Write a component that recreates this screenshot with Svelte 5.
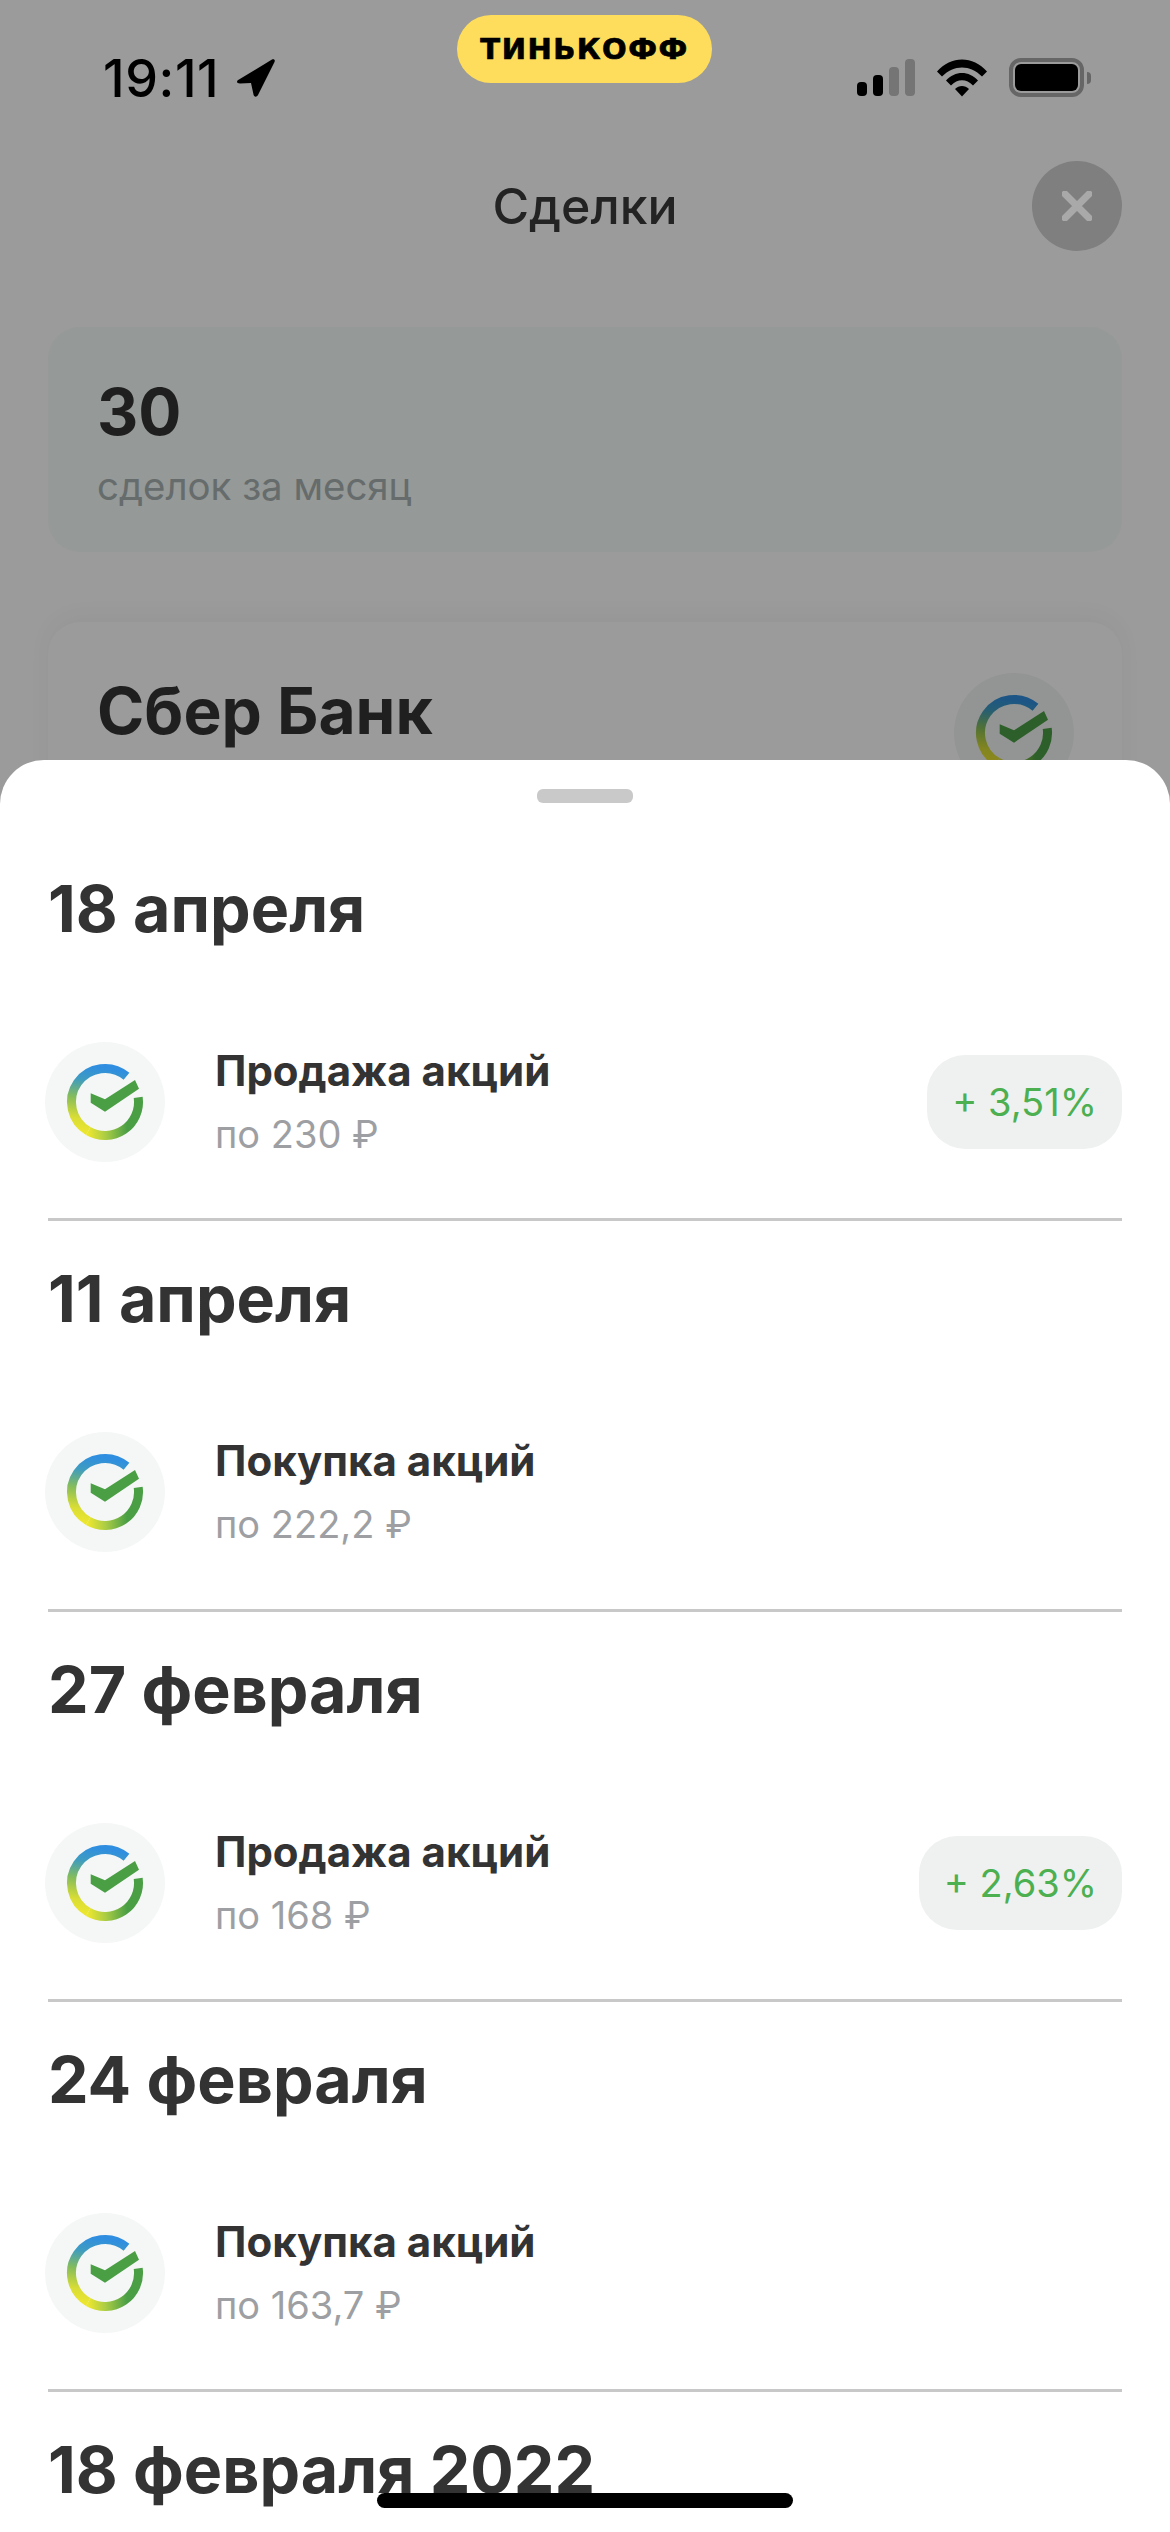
<script>
  const deals = [
    { date: "18 апреля", title: "Продажа акций", price: "по 230 ₽", profit: "+ 3,51%" },
    { date: "11 апреля", title: "Покупка акций", price: "по 222,2 ₽" },
    { date: "27 февраля", title: "Продажа акций", price: "по 168 ₽", profit: "+ 2,63%" },
    { date: "24 февраля", title: "Покупка акций", price: "по 163,7 ₽" }
  ];
</script>

{#snippet logo(id, dim)}
  <div class="logo" class:dim>
    <svg width="120" height="120" viewBox="0 0 120 120">
      <defs>
        <linearGradient id="{id}a" gradientUnits="userSpaceOnUse" x1="60" y1="26" x2="50" y2="92">
          <stop offset="0" stop-color="#2f8ee0" />
          <stop offset="0.22" stop-color="#3f9cc0" />
          <stop offset="0.5" stop-color="#86bd5a" />
          <stop offset="0.8" stop-color="#d9dd35" />
          <stop offset="1" stop-color="#ece62f" />
        </linearGradient>
        <linearGradient id="{id}b" gradientUnits="userSpaceOnUse" x1="43" y1="89" x2="82" y2="86">
          <stop offset="0" stop-color="#ece62f" />
          <stop offset="0.45" stop-color="#a9cc45" />
          <stop offset="1" stop-color="#4a9f45" />
        </linearGradient>
      </defs>
      <path d="M81.5 34.3A33.5 33.5 0 1 0 43.25 89" fill="none" stroke="url(#{id}a)" stroke-width="9" />
      <path d="M43.25 89A33.5 33.5 0 0 0 93.2 55.3" fill="none" stroke="url(#{id}b)" stroke-width="9" />
      <path d="M45.7 51.3V60.7L60 69.7L94 46.7L90 38L60 57.3Z" fill="#4a9f45" />
    </svg>
  </div>
{/snippet}

<div class="page">
  <div class="status">
    <div class="time">
      19:11
      <svg class="arrow" width="40" height="40" viewBox="0 0 40 40">
        <path d="M3 21.5 36 1.5c2-1 3.5.5 2.5 2.5L22 37c-1.500 2.500-4 2-4.500-.5L15 25 4 25.500C.5 25.500 0 23 3 21.500Z" fill="#000" />
      </svg>
    </div>
    <div class="pill">ТИНЬКОФФ</div>
    <div class="indicators">
      <div class="signal">
        <span class="bar b1"></span>
        <span class="bar b2"></span>
        <span class="bar b3 off"></span>
        <span class="bar b4 off"></span>
      </div>
      <svg width="50" height="38" viewBox="0 0 50 38">
        <path d="M0 12.500C14-3.500 36-3.500 50 12.500L45 17.500C33 5.500 17 5.500 5 17.500Z" fill="#000" />
        <path d="M9 21.500C18 11.500 32 11.500 41 21.500L36 26.500C29.500 19.500 20.500 19.500 14 26.500Z" fill="#000" />
        <path d="M18 30C22 26 28 26 32 30L25 37.500Z" fill="#000" />
      </svg>
      <div class="battery">
        <div class="cell"><span></span></div>
        <i></i>
      </div>
    </div>
  </div>

  <header class="nav">
    <h1>Сделки</h1>
    <button class="close" aria-label="Закрыть">
      <svg width="30" height="30" viewBox="0 0 30 30">
        <path d="M3 3 27 27M27 3 3 27" stroke="#a9a9a9" stroke-width="7" stroke-linecap="round" />
      </svg>
    </button>
  </header>

  <section class="summary">
    <div class="count">30</div>
    <div class="count-label">сделок за месяц</div>
  </section>

  <section class="company">
    <div class="company-name">Сбер Банк</div>
    {@render logo("bg", true)}
  </section>

  <div class="sheet">
    <div class="handle"></div>
    {#each deals as deal, i}
      <section class="deal">
        <h2>{deal.date}</h2>
        <div class="row">
          {@render logo("d" + i, false)}
          <div class="info">
            <div class="title">{deal.title}</div>
            <div class="price">{deal.price}</div>
          </div>
          {#if deal.profit}
            <div class="profit">{deal.profit}</div>
          {/if}
        </div>
      </section>
    {/each}
    <h2 class="last">18 февраля 2022</h2>
  </div>

  <div class="home"></div>
</div>

<style>
  :global(body) {
    margin: 0;
    background: #9b9b9b;
  }

  .page {
    position: relative;
    width: 1170px;
    height: 2532px;
    overflow: hidden;
    background: #9b9b9b;
    font-family: Inter, "Noto Sans", sans-serif;
    color: #222;
  }

  .status {
    height: 100px;
    position: relative;
    display: flex;
    justify-content: space-between;
    padding: 0 79px 0 103px;
    box-sizing: border-box;
  }

  .time {
    display: flex;
    align-items: center;
    gap: 17px;
    height: 50px;
    margin-top: 53px;
    font-size: 52px;
    font-weight: 500;
    letter-spacing: 0.6px;
    color: #000;
  }

  .pill {
    position: absolute;
    left: 457px;
    top: 15px;
    width: 255px;
    height: 68px;
    border-radius: 34px;
    background: #ffdd5c;
    display: flex;
    align-items: center;
    justify-content: center;
    font-family: "DejaVu Sans", sans-serif;
    font-weight: 700;
    font-size: 29px;
    letter-spacing: 1.5px;
    -webkit-text-stroke: 0.7px #000;
    color: #000;
  }

  .indicators {
    display: flex;
    align-items: flex-start;
    padding-top: 59px;
    gap: 22px;
  }

  .signal {
    display: flex;
    align-items: flex-end;
    gap: 6px;
    height: 37px;
  }

  .bar {
    width: 10px;
    border-radius: 4px;
    background: #000;
  }
  .b1 { height: 14px; }
  .b2 { height: 21px; }
  .b3 { height: 29px; }
  .b4 { height: 37px; }
  .off { background: #757575; }

  .battery {
    display: flex;
    align-items: center;
    gap: 3px;
    margin-top: -1px;
  }

  .cell {
    width: 75px;
    height: 39px;
    box-sizing: border-box;
    border: 4px solid #666;
    border-radius: 12px;
    padding: 2px;
    display: flex;
  }

  .cell span {
    flex: 1;
    background: #000;
    border-radius: 6px;
  }

  .battery i {
    width: 4px;
    height: 12px;
    background: #666;
    border-radius: 0 4px 4px 0;
  }

  .nav {
    height: 90px;
    margin-top: 61px;
    position: relative;
    display: flex;
    align-items: center;
    justify-content: center;
  }

  h1 {
    margin: 0;
    font-size: 50px;
    font-weight: 500;
    color: #232323;
  }

  .close {
    position: absolute;
    right: 48px;
    top: 0;
    width: 90px;
    height: 90px;
    padding: 0;
    border: 0;
    border-radius: 50%;
    background: #7f7f7f;
    display: flex;
    align-items: center;
    justify-content: center;
  }

  .summary {
    margin: 76px 48px 0;
    height: 225px;
    box-sizing: border-box;
    padding: 50px 49px 0;
    border-radius: 32px;
    background: #959997;
  }

  .count {
    font-size: 64px;
    font-weight: 700;
    line-height: 70px;
    color: #1f1f1f;
  }

  .count-label {
    margin-top: 17px;
    font-size: 38.4px;
    line-height: 44px;
    color: #666b6b;
  }

  .company {
    margin: 70px 48px 0;
    height: 300px;
    box-sizing: border-box;
    padding: 51px 48px 0 49px;
    border-radius: 32px;
    background: #9b9b9b;
    box-shadow: 0 -6px 24px rgba(0, 0, 0, 0.035);
    display: flex;
    justify-content: space-between;
    align-items: flex-start;
  }

  .company-name {
    font-size: 64px;
    font-weight: 700;
    line-height: 76px;
    color: #1f1f1f;
  }

  .logo {
    width: 120px;
    height: 120px;
    flex: none;
    border-radius: 50%;
    background: #f5f7f6;
  }

  .logo.dim {
    filter: brightness(0.6);
  }

  .logo svg {
    display: block;
  }

  .sheet {
    position: absolute;
    left: 0;
    right: 0;
    top: 760px;
    bottom: 0;
    padding: 29px 48px 0;
    border-radius: 44px 44px 0 0;
    background: #fff;
    overflow: hidden;
  }

  .handle {
    width: 96px;
    height: 14px;
    margin: 0 auto 28px;
    border-radius: 6px;
    background: #c9c9c9;
  }

  .deal {
    height: 390.3px;
    box-sizing: border-box;
    border-bottom: 3px solid #c8c8c8;
    padding-top: 38px;
  }

  h2 {
    margin: 0;
    height: 80px;
    font-size: 64.5px;
    font-weight: 700;
    line-height: 80px;
    color: #333;
  }

  .row {
    display: flex;
    align-items: center;
    margin-top: 93px;
    margin-left: -3px;
  }

  .info {
    margin-left: 50px;
    flex: 1;
  }

  .title {
    font-size: 42px;
    font-weight: 700;
    line-height: 50px;
    color: #333;
  }

  .price {
    margin-top: 14px;
    font-size: 38px;
    line-height: 48px;
    color: #9d9fa3;
  }

  .profit {
    height: 94px;
    padding: 0 25px;
    border-radius: 38px;
    background: #eff1f0;
    display: flex;
    align-items: center;
    font-size: 38px;
    color: #4caf50;
  }

  .last {
    padding-top: 38px;
  }

  .home {
    position: absolute;
    left: 377px;
    top: 2493px;
    width: 416px;
    height: 15px;
    border-radius: 8px;
    background: #000;
  }
</style>
